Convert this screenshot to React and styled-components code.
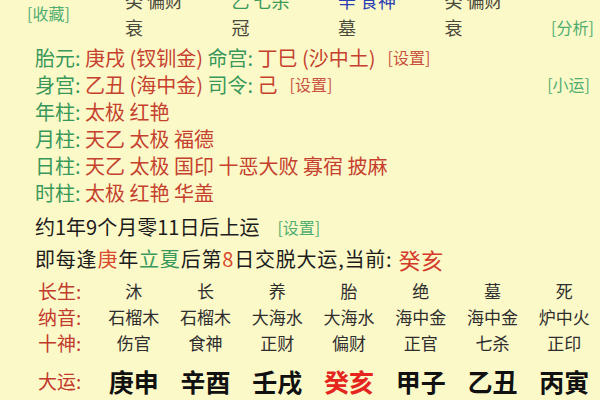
import React from 'react';
import styled, { createGlobalStyle } from 'styled-components';

const GlobalStyle = createGlobalStyle`
  html, body {
    margin: 0;
    padding: 0;
    background: #fcf9c9;
  }
  body {
    font-family: "Noto Sans CJK SC", "Noto Sans", sans-serif;
    color: #1c1c1c;
    overflow: hidden;
  }
`;

const Page = styled.div`
  width: 600px;
  height: 400px;
  overflow: hidden;
  background: #fcf9c9;
`;

const PillarGrid = styled.div`
  display: grid;
  grid-template-columns: 125px repeat(4, 106.5px) 1fr;
  grid-template-rows: 27px 27px;
  margin-top: -13.5px;
  font-size: 18px;
  line-height: 27px;
`;

const SideLink = styled.span`
  grid-row: ${(p) => p.$row || 'auto'};
  grid-column: ${(p) => p.$col || 'auto'};
  align-self: center;
  justify-self: ${(p) => (p.$end ? 'end' : 'start')};
  padding: ${(p) => (p.$end ? '0 10px 0 0' : '0 0 0 27px')};
  font-size: 16px;
  white-space: nowrap;
  color: #4fae70;
`;

const PillarCell = styled.span`
  color: ${(p) => p.$color || '#4a4a3c'};
`;

const Info = styled.div`
  margin-top: 3px;
  padding-left: 35px;
  font-size: 20px;
`;

const Line = styled.div`
  display: flex;
  align-items: center;
  height: ${(p) => p.$h || 27}px;
  margin-top: ${(p) => p.$top || 0}px;
  letter-spacing: ${(p) => p.$spread || 0}px;
  white-space: pre;
`;

const Label = styled.span`
  color: #38985a;
`;

const Value = styled.span`
  color: #c5412e;
`;

const Link = styled.span`
  font-size: 16px;
  letter-spacing: 0;
  margin-left: ${(p) => p.$gap || 8}px;
  color: ${(p) => (p.$red ? '#c9523f' : '#4fae70')};
`;

const RightLink = styled(Link)`
  margin-left: auto;
  padding-right: 10px;
`;

const Plain = styled.span`
  color: #1c1c1c;
`;

const Accent = styled.span`
  color: ${(p) => p.$color};
  font-size: ${(p) => p.$size || 20}px;
  margin-left: ${(p) => p.$gap || 0}px;
`;

const Luck = styled.div`
  margin-top: 3px;
  display: grid;
  grid-template-columns: 60px repeat(7, 1fr);
  padding-left: 40px;
  margin-left: -2px;
`;

const RowLabel = styled.span`
  display: flex;
  align-items: center;
  height: ${(p) => p.$h || 26}px;
  margin-top: ${(p) => p.$top || 0}px;
  font-size: 19px;
  color: #c23a2c;
`;

const Cell = styled.span`
  display: flex;
  align-items: center;
  justify-content: center;
  height: 26px;
  font-size: 17px;
  color: #2e2e2e;
`;

const BigCell = styled.span`
  display: flex;
  align-items: center;
  justify-content: center;
  height: 36px;
  margin-top: 7px;
  font-size: 25px;
  font-weight: 700;
  color: ${(p) => (p.$current ? '#e4261f' : '#111')};
`;

const pillars = [
  { top: '癸 偏财', bottom: '衰' },
  { top: '乙 七杀', bottom: '冠', color: '#38985a' },
  { top: '辛 食神', bottom: '墓', color: '#2a3db5' },
  { top: '癸 偏财', bottom: '衰' },
];

const rows = [
  { label: '长生:', cells: ['沐', '长', '养', '胎', '绝', '墓', '死'] },
  { label: '纳音:', cells: ['石榴木', '石榴木', '大海水', '大海水', '海中金', '海中金', '炉中火'] },
  { label: '十神:', cells: ['伤官', '食神', '正财', '偏财', '正官', '七杀', '正印'] },
];

const dayun = ['庚申', '辛酉', '壬戌', '癸亥', '甲子', '乙丑', '丙寅'];

const shensha = [
  { label: '年柱:', value: '太极 红艳' },
  { label: '月柱:', value: '天乙 太极 福德' },
  { label: '日柱:', value: '天乙 太极 国印 十恶大败 寡宿 披麻' },
  { label: '时柱:', value: '太极 红艳 华盖' },
];

export default function App() {
  return (
    <Page>
      <GlobalStyle />
      <PillarGrid>
        <SideLink $row="1 / 3" $col="1">[收藏]</SideLink>
        {pillars.map((p, i) => (
          <PillarCell key={`t${i}`} $color={p.color} style={{ gridRow: 1, gridColumn: i + 2 }}>
            {p.top}
          </PillarCell>
        ))}
        {pillars.map((p, i) => (
          <PillarCell key={`b${i}`} style={{ gridRow: 2, gridColumn: i + 2 }}>
            {p.bottom}
          </PillarCell>
        ))}
        <SideLink $row="2" $col="6" $end>[分析]</SideLink>
      </PillarGrid>

      <Info>
        <Line>
          <Label>胎元: </Label>
          <Value>庚戌 (钗钏金) </Value>
          <Label>命宫: </Label>
          <Value>丁巳 (沙中土)</Value>
          <Link $red $gap={12}>[设置]</Link>
        </Line>
        <Line>
          <Label>身宫: </Label>
          <Value>乙丑 (海中金) </Value>
          <Label>司令: </Label>
          <Value>己</Value>
          <Link $red $gap={12}>[设置]</Link>
          <RightLink>[小运]</RightLink>
        </Line>
        {shensha.map((s) => (
          <Line key={s.label}>
            <Label>{s.label} </Label>
            <Value>{s.value}</Value>
          </Line>
        ))}
        <Line $h={32} $top={5}>
          <Plain>约1年9个月零11日后上运</Plain>
          <Link $gap={18}>[设置]</Link>
        </Line>
        <Line $h={32} $spread={0.8}>
          <Plain>即每逢</Plain>
          <Accent $color="#d9492c">庚</Accent>
          <Plain>年</Plain>
          <Accent $color="#38985a">立夏</Accent>
          <Plain>后第</Plain>
          <Accent $color="#d9492c">8</Accent>
          <Plain>日交脱大运,当前:</Plain>
          <Accent $color="#d33a2a" $size={22} $gap={6}>癸亥</Accent>
        </Line>
      </Info>

      <Luck>
        {rows.map((r) => (
          <React.Fragment key={r.label}>
            <RowLabel>{r.label}</RowLabel>
            {r.cells.map((c, i) => (
              <Cell key={i}>{c}</Cell>
            ))}
          </React.Fragment>
        ))}
        <RowLabel $h={36} $top={7}>大运:</RowLabel>
        {dayun.map((d) => (
          <BigCell key={d} $current={d === '癸亥'}>{d}</BigCell>
        ))}
      </Luck>
    </Page>
  );
}
